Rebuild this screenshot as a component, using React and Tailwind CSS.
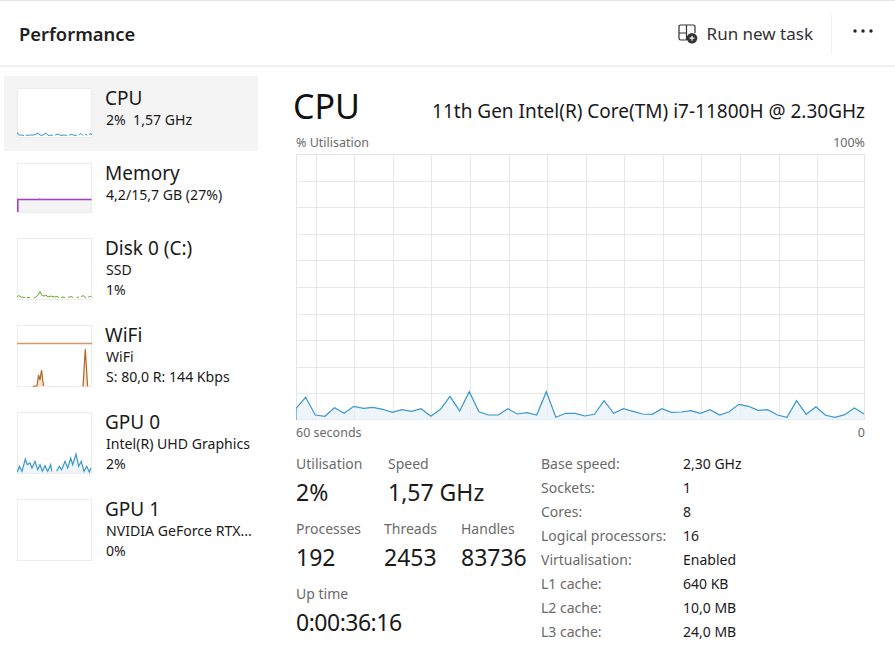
import React from "react";

const FONT = "font-['Noto_Sans',sans-serif]";

const vals = [85,52,105,109,83,100,79,85,82,88,97,89,94,86,109,88,49,93,35,95,105,105,86,102,98,105,35,112,100,100,108,103,62,100,86,94,102,103,86,97,96,92,100,89,105,95,73,79,91,89,105,112,62,103,80,106,112,104,84,102];
const pts = vals.map((v, i) => [i * 9.627, 380 + v / 3 - 154]);
const line = pts.map((p) => p.map((n) => n.toFixed(1)).join(",")).join(" ");
const hLines = Array.from({ length: 9 }, (_, i) => Math.round(26.6 * (i + 1)) + 0.5);
const vLines = Array.from({ length: 14 }, (_, i) => Math.round(19.7 + 38.57 * i) + 0.5);

function Chart() {
  return (
    <svg width="569" height="266" viewBox="0 0 569 266" className="block">
      <rect x="0.5" y="0.5" width="568" height="265" fill="#fff" stroke="#e4e4e4" />
      {hLines.map((y) => (
        <line key={y} x1="0" x2="569" y1={y} y2={y} stroke="#e8e8e8" />
      ))}
      {vLines.map((x) => (
        <line key={x} x1={x} x2={x} y1="0" y2="266" stroke="#e8e8e8" />
      ))}
      <polygon points={`0,266 ${line} 568,266`} fill="#e6f0f8" fillOpacity="0.7" />
      <polyline points={`0,266 ${line}`} fill="none" stroke="#3b97cf" strokeWidth="1.2" />
    </svg>
  );
}

function Thumb({ h, children }) {
  return (
    <svg width="75" height={h} viewBox={`0 0 75 ${h}`} className="block shrink-0">
      <rect x="0.5" y="0.5" width="74" height={h - 1} fill="#fff" stroke="#ececec" />
      {children}
    </svg>
  );
}

const cpuT = (
  <g fill="none" stroke="#3b97cf" strokeWidth="1">
    <polyline points="0,44 1.5,47 4,47 7,47.5" />
    <polyline points="9,47.5 13,47 17,47 19,46 21,45 23,47 25,47.5 29,45 31,47.5 34,47 36,47.5" />
    <polyline points="38,47 41,46 44,47.5 47,47 50,47.5" />
    <polyline points="52,47 55,46.5 58,47.5 60,47" />
    <polyline points="62,47 64,45.5 66,47.5" />
    <polyline points="68,47 69,46 70,47.5" />
    <polyline points="72.5,47 73.5,45 74.5,47" />
  </g>
);
const memT = (
  <>
    <rect x="1" y="37" width="73" height="12" fill="#f3f3f3" />
    <path d="M0.8 49V36.5H74.5" fill="none" stroke="#a03fc0" strokeWidth="1.6" />
    <path d="M21 36.5L22.5 35.5L24 36.5" fill="none" stroke="#b878cc" strokeWidth="1" />
  </>
);
const diskT = (
  <g fill="none" stroke="#62ae22" strokeWidth="1">
    <polyline points="0,59 1.5,57.5 4,59 8,59.5" />
    <polyline points="10,59.5 13,59.5" />
    <polyline points="17,60 19,59 21,57 23,53.5 25,57.5 27,58 29,57 31,59 34,58 37,59 40,58.5 42,59.5" />
    <polyline points="44,59.5 46,59 48,59.5" />
    <polyline points="51,59.5 54,58.5 56,59.5" />
    <polyline points="60,59.5 62,59" />
    <polyline points="64,59 66,57.5 68,59 69,59.5" />
    <polyline points="71,59.5 73,58 74.5,59" />
  </g>
);
const wifiT = (
  <>
    <line x1="0" x2="75" y1="18.5" y2="18.5" stroke="#d09a66" strokeWidth="1.5" />
    <line x1="0" x2="75" y1="61.5" y2="61.5" stroke="#ececec" />
    <polygon points="18,61 20,61 21.5,50 23,55 24.5,45 26.5,61 29,61" fill="#f4e2d2" />
    <polyline points="16,61.5 18,61 20,61 21.5,50 23,55 24.5,45 26.5,61" fill="none" stroke="#b8651f" strokeWidth="1.2" />
    <polygon points="66,61.5 68.3,24 70.6,61.5" fill="#f4e2d2" />
    <polyline points="66,61.5 68.3,24 70.6,61.5" fill="none" stroke="#b8651f" strokeWidth="1.2" />
  </>
);
const gpuA = [[52,218],[58,200],[66,215],[76,178],[82,195],[90,190],[96,205],[105,185],[113,210],[120,195],[127,215],[135,198],[143,215],[152,195],[155,215]];
const gpuB = [[170,215],[178,200],[185,210],[195,185],[203,205],[212,175],[218,195],[228,163],[236,200],[244,185],[252,215],[260,200],[268,217],[273,205]];
const gpuPts = (a) => a.map(([x, y]) => `${((x - 51) / 3).toFixed(1)},${((y - 37) / 3).toFixed(1)}`).join(" ");
const gpuT = (
  <>
    <polygon points={`0.5,61 ${gpuPts(gpuA)} ${gpuPts(gpuB)} 74,61`} fill="#eef4f9" />
    <polyline points={gpuPts(gpuA)} fill="none" stroke="#3b97cf" strokeWidth="1.2" />
    <polyline points={gpuPts(gpuB)} fill="none" stroke="#3b97cf" strokeWidth="1.2" />
  </>
);

function SideItem({ active, h, chart, title, lines }) {
  return (
    <div className={`flex pl-[13px] pr-2 pt-3 pb-[13px] ${active ? "bg-[#f4f4f4]" : ""}`}>
      <Thumb h={h}>{chart}</Thumb>
      <div className="ml-[13px] min-w-0 -mt-[2px]">
        <div className="text-[19px] leading-[24px] text-[#1a1a1a]">{title}</div>
        {lines.map((l) => (
          <div key={l} className="pl-px text-[14.1px] leading-[20px] text-[#1a1a1a] whitespace-pre">{l}</div>
        ))}
      </div>
    </div>
  );
}

function Stat({ label, value, className = "", valueClass = "" }) {
  return (
    <div className={className}>
      <div className="text-[14px] leading-[20px] text-[#6a6a6a]">{label}</div>
      <div className={`text-[23px] leading-[36px] text-[#1a1a1a] ${valueClass}`}>{value}</div>
    </div>
  );
}

const details = [
  ["Base speed:", "2,30 GHz"],
  ["Sockets:", "1"],
  ["Cores:", "8"],
  ["Logical processors:", "16"],
  ["Virtualisation:", "Enabled"],
  ["L1 cache:", "640 KB"],
  ["L2 cache:", "10,0 MB"],
  ["L3 cache:", "24,0 MB"],
];

export default function App() {
  return (
    <div className={`w-[895px] h-[662px] overflow-hidden bg-white ${FONT}`}>
      <header className="h-[67px] pt-[2px] border-t border-b-2 border-t-[#e6e6e6] border-b-[#f0f0f0] flex items-center pl-[19px] pr-[22px]">
        <div className="text-[18.4px] font-semibold text-[#1f1f1f] flex-1">Performance</div>
        <svg width="20" height="20" viewBox="0 0 20 20" className="mr-[9px]">
          <path d="M8.5 16H2.7A1.7 1.7 0 0 1 1 14.3V2.7A1.7 1.7 0 0 1 2.7 1H15.3A1.7 1.7 0 0 1 17 2.7V9M1 9H8.5V16M8.5 1V9" fill="none" stroke="#333" strokeWidth="1.2" />
          <circle cx="14" cy="14.2" r="5.3" fill="#333" />
          <path d="M14 11.7V16.7M11.5 14.2H16.5" stroke="#fff" strokeWidth="1.2" />
        </svg>
        <div className="text-[17px] text-[#333]">Run new task</div>
        <div className="w-px h-[40px] bg-[#f0f0f0] ml-[18px] mr-[21px]" />
        <svg width="20" height="4" viewBox="0 0 20 4" className="-mt-[6px]">
          <circle cx="2" cy="2" r="1.7" fill="#222" />
          <circle cx="10" cy="2" r="1.7" fill="#222" />
          <circle cx="18" cy="2" r="1.7" fill="#222" />
        </svg>
      </header>
      <div className="flex">
        <aside className="w-[254px] ml-1 mt-[9px] shrink-0">
          <SideItem active h={50} chart={cpuT} title="CPU" lines={["2%  1,57 GHz"]} />
          <SideItem h={50} chart={memT} title="Memory" lines={["4,2/15,7 GB (27%)"]} />
          <SideItem h={62} chart={diskT} title="Disk 0 (C:)" lines={["SSD", "1%"]} />
          <SideItem h={62} chart={wifiT} title="WiFi" lines={["WiFi", "S: 80,0 R: 144 Kbps"]} />
          <SideItem h={62} chart={gpuT} title="GPU 0" lines={["Intel(R) UHD Graphics", "2%"]} />
          <SideItem h={62} title="GPU 1" lines={["NVIDIA GeForce RTX...", "0%"]} />
        </aside>
        <main className="ml-[38px] w-[569px] shrink-0">
          <div className="flex items-end justify-between h-[66px] -ml-[3px]">
            <div className="text-[34px] leading-[48px] text-[#111] mb-[3px]">CPU</div>
            <div className="text-[19px] leading-[36px] text-[#1a1a1a] whitespace-nowrap mb-[4px]">11th Gen Intel(R) Core(TM) i7-11800H @ 2.30GHz</div>
          </div>
          <div className="flex justify-between text-[12.5px] leading-[18px] text-[#6a6a6a] mt-[1px] mb-[2px]">
            <span>% Utilisation</span>
            <span>100%</span>
          </div>
          <Chart />
          <div className="flex justify-between text-[12.5px] leading-[18px] text-[#6a6a6a] mt-[4px]">
            <span>60 seconds</span>
            <span>0</span>
          </div>
          <div className="flex mt-[12px]">
            <div className="w-[245px] shrink-0">
              <div className="flex">
                <Stat label="Utilisation" value="2%" className="w-[92px]" />
                <Stat label="Speed" value="1,57 GHz" />
              </div>
              <div className="flex mt-[9px]">
                <Stat label="Processes" value="192" className="w-[88px]" />
                <Stat label="Threads" value="2453" className="w-[77px]" />
                <Stat label="Handles" value="83736" />
              </div>
              <Stat label="Up time" value="0:00:36:16" className="mt-[9px]" valueClass="tracking-[-0.5px]" />
            </div>
            <div className="grid grid-cols-[142px_1fr] auto-rows-[24px] text-[14px] leading-[24px] -mt-[2px]">
              {details.map(([k, v]) => (
                <React.Fragment key={k}>
                  <div className="text-[#6a6a6a]">{k}</div>
                  <div className="text-[#1a1a1a]">{v}</div>
                </React.Fragment>
              ))}
            </div>
          </div>
        </main>
      </div>
    </div>
  );
}
